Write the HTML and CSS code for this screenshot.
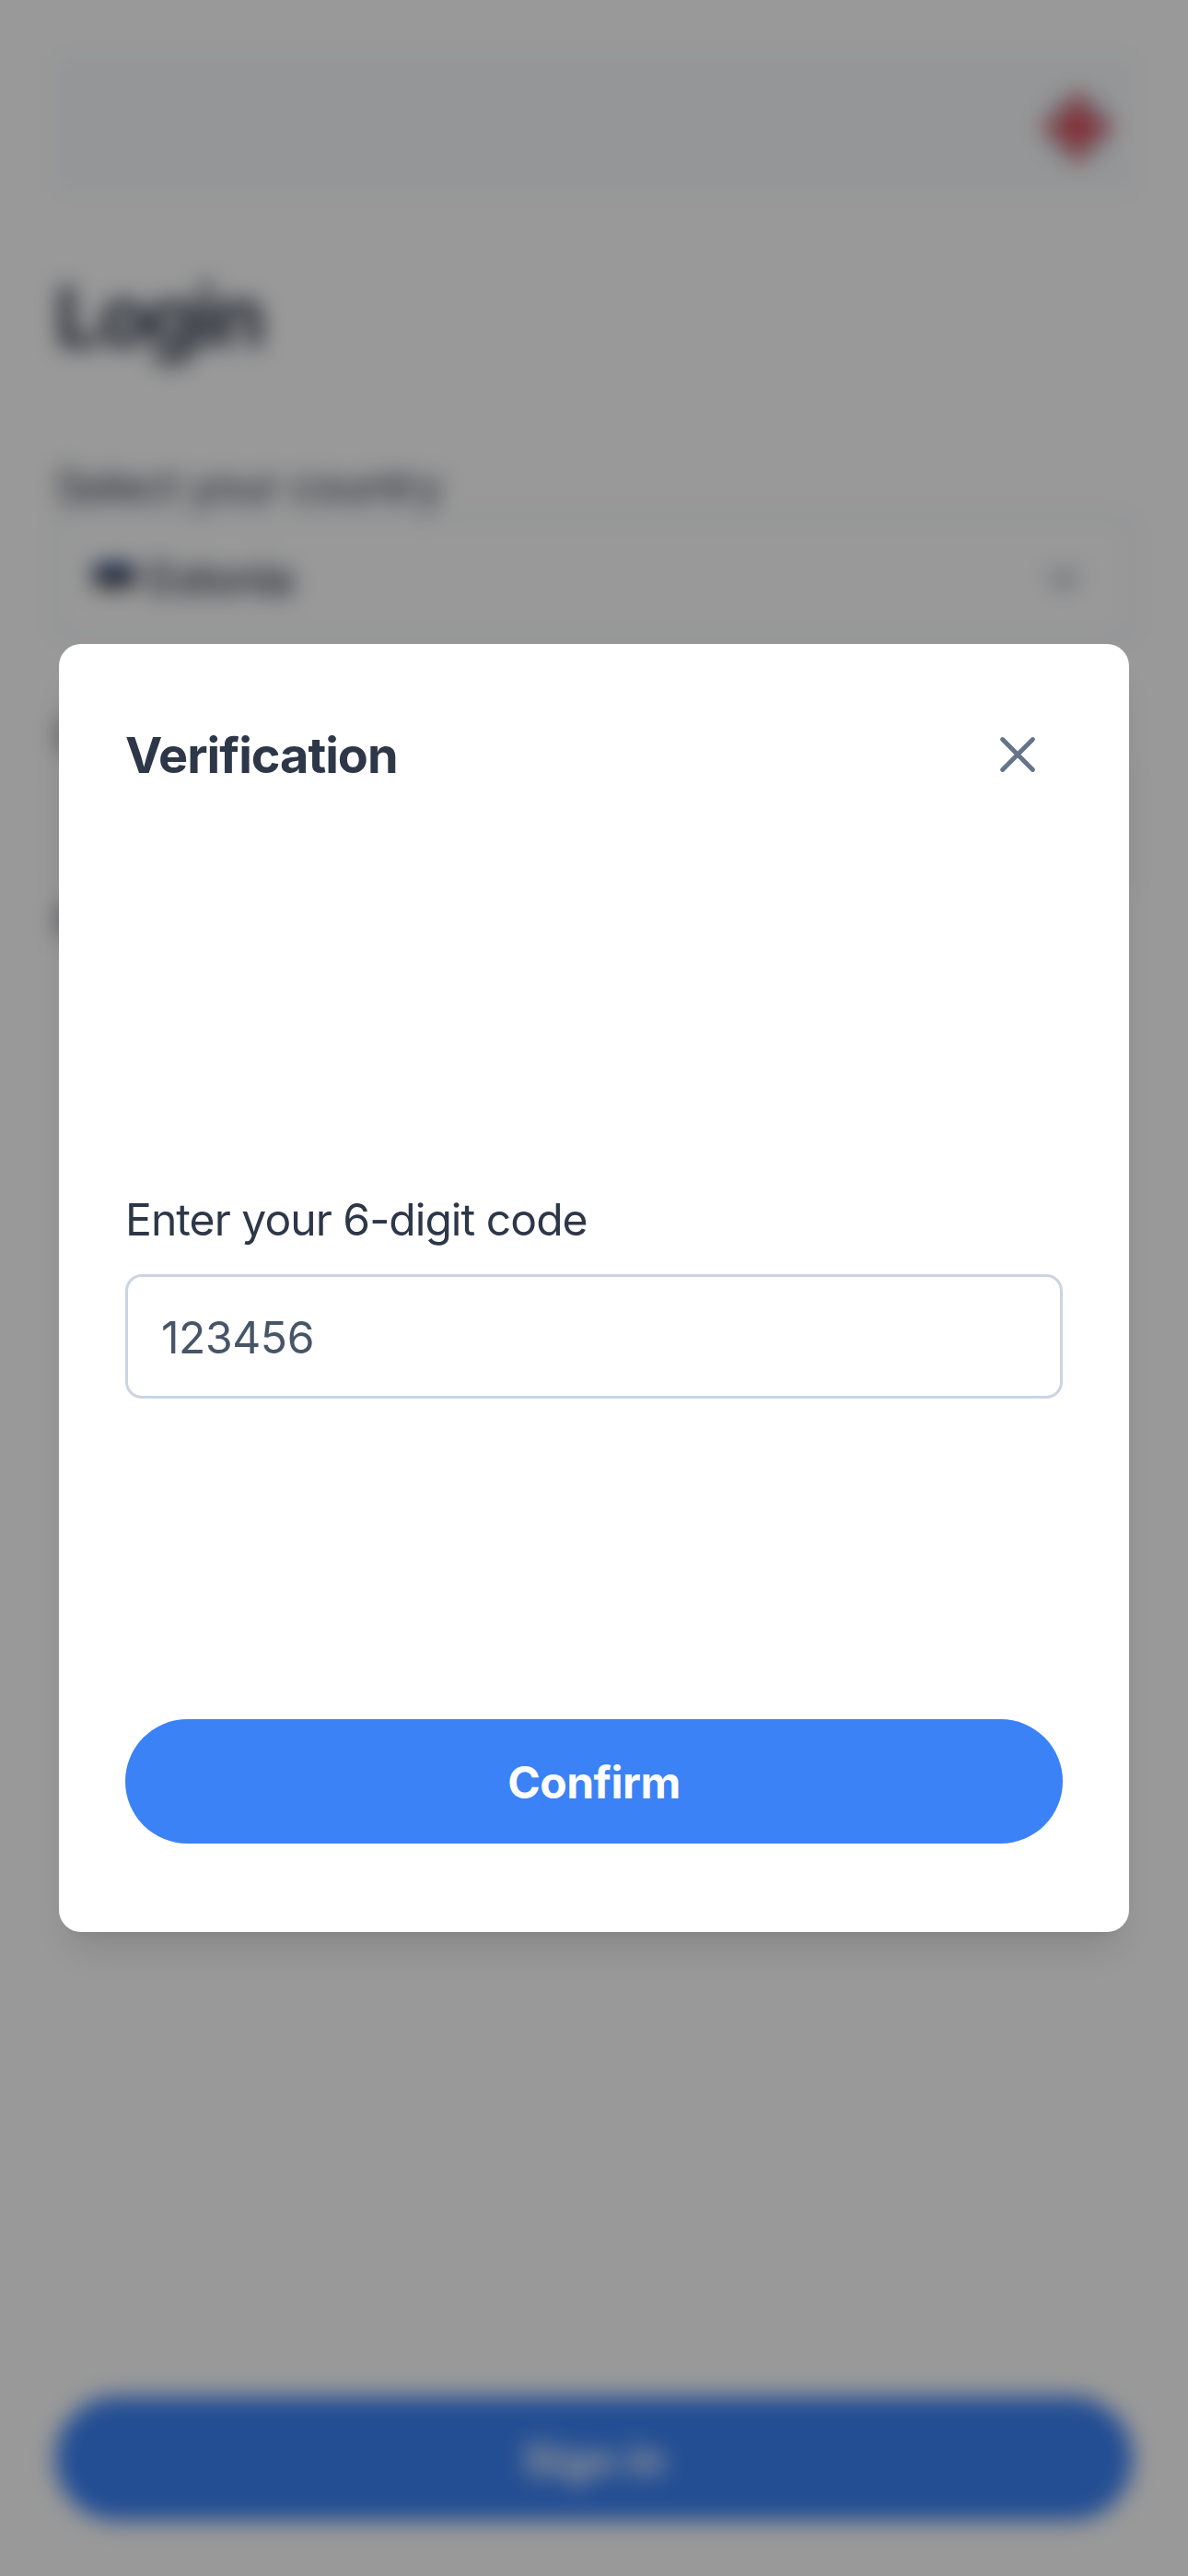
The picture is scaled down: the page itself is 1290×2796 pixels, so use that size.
FILE: index.html
```html
<!DOCTYPE html>
<html lang="en">
<head>
<meta charset="utf-8">
<title>Login</title>
<link rel="stylesheet" href="styles.css">
</head>
<body>
<main class="page">
  <header class="topbar">
    <svg class="flag-round" viewBox="0 0 60 60">
      <clipPath id="round"><circle cx="30" cy="30" r="30"/></clipPath>
      <g clip-path="url(#round)">
        <rect width="60" height="60" fill="#eee"/>
        <path d="M14 7H22V16ZM7 14V22H16ZM46 7H38V16ZM53 14V22H44ZM14 53H22V44ZM7 46V38H16ZM46 53H38V44ZM53 46V38H44Z" fill="#29569c"/>
        <path d="M25.5 0h9v25.500h25.500v9H34.500v25.500h-9V34.500H0v-9h25.500Z" fill="#d8141e"/>
        <path d="M10 10l12 12M50 10L38 22M10 50l12-12M50 50L38 38" stroke="#d8141e" stroke-width="2"/>
      </g>
    </svg>
  </header>
  <h1 class="heading">Login</h1>
  <form class="form">
    <div class="field">
      <label class="field-label">Select your country</label>
      <div class="control">
        <svg class="flag" viewBox="0 0 48 36">
          <rect width="48" height="14" fill="#2a4a8c"/>
          <rect y="14" width="48" height="12" fill="#1c1c1c"/>
          <rect y="26" width="48" height="10" fill="#e4e4e4"/>
        </svg>
        <span class="control-value">Estonia</span>
        <svg class="chevron" viewBox="0 0 36 36"><path d="M5 12l13 13 13-13" fill="none" stroke="#64748b" stroke-width="5" stroke-linecap="round" stroke-linejoin="round"/></svg>
      </div>
    </div>
    <div class="field">
      <label class="field-label">ID</label>
      <div class="control"></div>
    </div>
    <p class="note">Remember me</p>
  </form>
  <button class="button">Sign in</button>
</main>
<div class="overlay">
  <section class="modal" role="dialog">
    <header class="modal-header">
      <h2 class="modal-title">Verification</h2>
      <svg class="close" viewBox="0 0 72 72"><path d="M19.6 19.6L52.4 52.4M52.4 19.6L19.6 52.4" fill="none" stroke="#64748b" stroke-width="5" stroke-linecap="round"/></svg>
    </header>
    <div class="modal-body">
      <label class="code-label" for="code">Enter your 6-digit code</label>
      <input class="code-input" id="code" type="text" value="123456">
    </div>
    <button class="button">Confirm</button>
  </section>
</div>
</body>
</html>
```
FILE: styles.css
```css
* { box-sizing: border-box; }
body {
  margin: 0;
  background: #fff;
  color: #2d3748;
  font-family: Inter, "Liberation Sans", sans-serif;
  font-size: 48px;
  line-height: 72px;
}
h1, h2, p { margin: 0; }
.page {
  display: flex;
  flex-direction: column;
  height: 2796px;
  padding: 60px;
}
.topbar {
  display: flex;
  align-items: center;
  justify-content: flex-end;
  height: 150px;
  padding: 6px 24px 0;
  background: #f8fafc;
}
.flag-round { width: 72px; height: 72px; }
.heading {
  margin-top: 80px;
  font-size: 90px;
  line-height: 108px;
  font-weight: 700;
  letter-spacing: -3.8px;
}
.form { margin-top: 94px; }
.field { margin-bottom: 68px; }
.field-label {
  display: block;
  margin-bottom: -4px;
  font-weight: 430;
  letter-spacing: -1.3px;
}
.control {
  display: flex;
  align-items: center;
  height: 135px;
  padding: 0 54px 0 39px;
  border: 3px solid #dde4ec;
  border-radius: 18px;
}
.flag { width: 45px; height: 36px; }
.control-value {
  flex: 1;
  margin-left: 14px;
  font-weight: 450;
  letter-spacing: -1.6px;
}
.chevron { width: 36px; height: 36px; }
.note { margin-top: -70px; font-weight: 400; }
.button {
  display: block;
  width: 100%;
  height: 135px;
  flex: none;
  margin-top: auto;
  padding: 2px 0 0;
  border: 0;
  border-radius: 68px;
  background: #3b82f6;
  color: #fff;
  font: 700 48px/72px Inter, "Liberation Sans", sans-serif;
  letter-spacing: -0.5px;
}
.overlay {
  position: fixed;
  inset: 0;
  display: flex;
  align-items: center;
  justify-content: center;
  background: rgba(0, 0, 0, 0.4);
  backdrop-filter: blur(12px);
}
.modal {
  display: flex;
  flex-direction: column;
  width: 1162px;
  height: 50%;
  padding: 84px 72px 96px;
  border-radius: 24px;
  background: #fff;
  box-shadow: 0 30px 45px -9px rgba(0, 0, 0, 0.1), 0 12px 18px -12px rgba(0, 0, 0, 0.1);
}
.modal-header {
  display: flex;
  align-items: center;
  justify-content: space-between;
  height: 72px;
  padding-right: 13px;
}
.modal-title {
  padding-top: 2px;
  font-size: 54px;
  font-weight: 700;
  letter-spacing: -1px;
}
.close { width: 72px; height: 72px; }
.modal-body {
  display: flex;
  flex: 1;
  flex-direction: column;
  justify-content: center;
  gap: 23px;
  padding-top: 85px;
}
.code-label {
  display: block;
  font-weight: 420;
  letter-spacing: -0.95px;
}
.code-input {
  width: 100%;
  height: 135px;
  padding: 2px 36px 0;
  border: 3px solid #cbd5e1;
  border-radius: 18px;
  outline: none;
  background: #fff;
  color: #475569;
  font: 420 48px/72px Inter, "Liberation Sans", sans-serif;
  letter-spacing: -0.4px;
}
```
